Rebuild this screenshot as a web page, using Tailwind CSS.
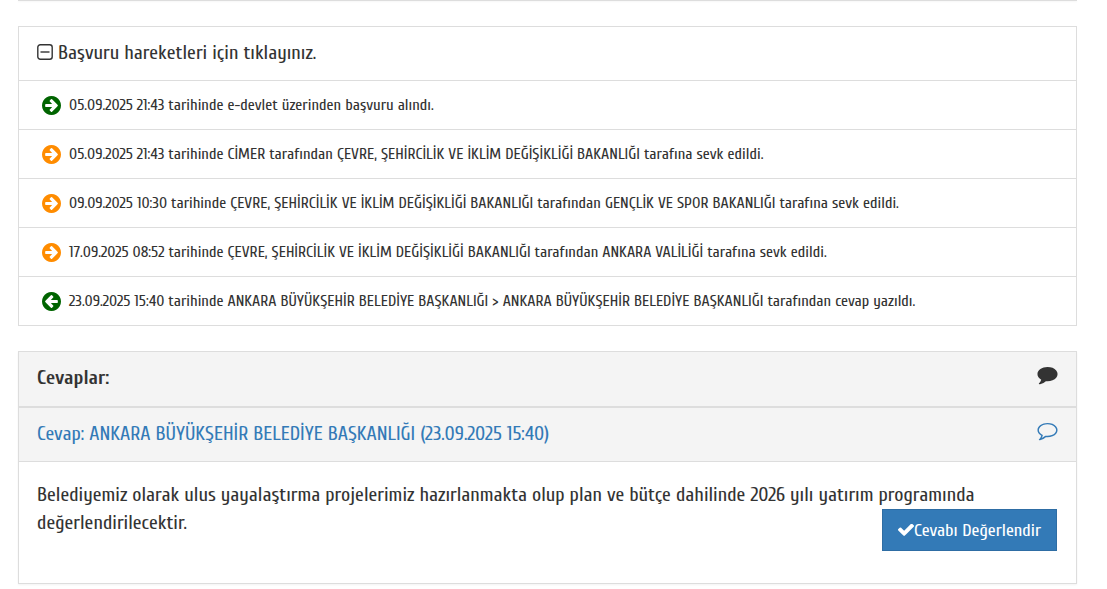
<!DOCTYPE html>
<html lang="tr">
<head>
    <meta charset="UTF-8">
    <meta name="viewport" content="width=device-width, initial-scale=1.0">
    <title>Başvuru Detayı</title>
    <script src="https://cdn.jsdelivr.net/npm/@tailwindcss/browser@4"></script>
</head>
<body class="bg-white font-['Cuprum','Roboto_Condensed','Roboto',sans-serif] text-[#333]">
    <!-- Icons -->
    <svg class="hidden">
        <symbol id="arrow-circle" viewBox="128 128 1536 1536">
            <path d="M1413 896q0-27-18-45l-91-91-362-362q-18-18-45-18t-45 18l-91 91q-18 18-18 45t18 45l189 189h-502q-26 0-45 19t-19 45v128q0 26 19 45t45 19h502l-189 189q-19 19-19 45t19 45l91 91q18 18 45 18t45-18l362-362 91-91q18-18 18-45zm251 0q0 209-103 385.500t-279.500 279.500-385.500 103-385.500-103-279.500-279.500-103-385.500 103-385.500 279.500-279.500 385.500-103 385.500 103 279.500 279.500 103 385.500z"/>
        </symbol>
    </svg>

    <div class="pl-[18px] pr-[30px] pb-1">
        <div class="h-px bg-[#ddd] shadow-xs mb-[25px]"></div>

        <!-- Application history -->
        <section class="border border-[#ddd] mb-[25px]">
            <h2>
                <button type="button" class="flex w-full items-center gap-[5px] px-[18px] pb-0.5 h-[53px] text-[20px] text-left">
                    <svg class="size-4 mb-0.5" viewBox="0 0 16 16" fill="none" stroke="currentColor" stroke-width="1.400">
                        <rect x=".8" y=".8" width="14.400" height="14.400" rx="2.500"/>
                        <path d="M3.500 8h9"/>
                    </svg>
                    Başvuru hareketleri için tıklayınız.
                </button>
            </h2>
            <ul class="text-[16px]">
                <li class="flex items-center gap-2 border-t border-[#ddd] px-[23px] h-[49px]">
                    <svg class="size-[19px] shrink-0 fill-[#006400]"><use href="#arrow-circle"/></svg>
                    <span>05.09.2025 21:43 tarihinde e-devlet üzerinden başvuru alındı.</span>
                </li>
                <li class="flex items-center gap-2 border-t border-[#ddd] px-[23px] h-[49px]">
                    <svg class="size-[19px] shrink-0 fill-[#ff8c00]"><use href="#arrow-circle"/></svg>
                    <span>05.09.2025 21:43 tarihinde CİMER tarafından ÇEVRE, ŞEHİRCİLİK VE İKLİM DEĞİŞİKLİĞİ BAKANLIĞI tarafına sevk edildi.</span>
                </li>
                <li class="flex items-center gap-2 border-t border-[#ddd] px-[23px] h-[49px]">
                    <svg class="size-[19px] shrink-0 fill-[#ff8c00]"><use href="#arrow-circle"/></svg>
                    <span>09.09.2025 10:30 tarihinde ÇEVRE, ŞEHİRCİLİK VE İKLİM DEĞİŞİKLİĞİ BAKANLIĞI tarafından GENÇLİK VE SPOR BAKANLIĞI tarafına sevk edildi.</span>
                </li>
                <li class="flex items-center gap-2 border-t border-[#ddd] px-[23px] h-[49px]">
                    <svg class="size-[19px] shrink-0 fill-[#ff8c00]"><use href="#arrow-circle"/></svg>
                    <span>17.09.2025 08:52 tarihinde ÇEVRE, ŞEHİRCİLİK VE İKLİM DEĞİŞİKLİĞİ BAKANLIĞI tarafından ANKARA VALİLİĞİ tarafına sevk edildi.</span>
                </li>
                <li class="flex items-center gap-2 border-t border-[#ddd] px-[23px] h-[49px]">
                    <svg class="size-[19px] shrink-0 fill-[#006400] rotate-180"><use href="#arrow-circle"/></svg>
                    <span>23.09.2025 15:40 tarihinde ANKARA BÜYÜKŞEHİR BELEDİYE BAŞKANLIĞI &gt; ANKARA BÜYÜKŞEHİR BELEDİYE BAŞKANLIĞI tarafından cevap yazıldı.</span>
                </li>
            </ul>
        </section>

        <!-- Answers -->
        <section class="border border-[#ddd] shadow-xs text-[20px]">
            <header class="flex justify-between bg-[#f4f4f4] border-b-2 border-[#ddd] px-[18px] pt-3 h-[56px]">
                <h2 class="font-bold leading-7">Cevaplar:</h2>
                <svg class="w-[21px] h-[23px] fill-[#333]" viewBox="0 0 1792 2048">
                    <path d="M1792 896q0 174-120 321.500t-326 233-450 85.500q-70 0-145-8-198 175-460 242-49 14-114 22-17 2-30.500-9t-17.500-29v-1q-3-4-.5-12t2-10 4.500-9.500l6-9 7-8.500 8-9q7-8 31-34.500t34.500-38 31-39.500 32.500-51 27-59 26-76q-157-89-247.500-220t-90.500-281q0-130 71-248.500t191-204.500 286-136.500 348-50.500q244 0 450 85.500t326 233 120 321.500z"/>
                </svg>
            </header>
            <a href="#cevap" class="flex justify-between bg-[#f4f4f4] border-b border-[#ddd] px-[18px] pt-3 h-[54px] text-[#337ab7]">
                <span class="leading-7">Cevap: ANKARA BÜYÜKŞEHİR BELEDİYE BAŞKANLIĞI (23.09.2025 15:40)</span>
                <svg class="w-[21px] h-[23px] fill-current" viewBox="0 0 1792 2048">
                    <path d="M896 384q-204 0-381.500 69.500t-282 187.500-104.500 255q0 112 71.500 213.500t201.500 175.500l87 50-27 96q-24 91-70 172 152-63 275-171l43-38 57 6q69 8 130 8 204 0 381.500-69.500t282-187.500 104.500-255-104.500-255-282-187.500-381.500-69.500zm896 512q0 174-120 321.500t-326 233-450 85.500q-70 0-145-8-198 175-460 242-49 14-114 22-17 2-30.500-9t-17.500-29v-1q-3-4-.5-12t2-10 4.500-9.500l6-9 7-8.500 8-9q7-8 31-34.500t34.500-38 31-39.500 32.500-51 27-59 26-76q-157-89-247.500-220t-90.500-281q0-130 71-248.500t191-204.500 286-136.500 348-50.500q244 0 450 85.500t326 233 120 321.500z"/>
                </svg>
            </a>
            <div id="cevap" class="pl-[18px] pr-[19px] pt-[19px] pb-8">
                <p class="leading-7">Belediyemiz olarak ulus yayalaştırma projelerimiz hazırlanmakta olup plan ve bütçe dahilinde 2026 yılı yatırım programında<br>değerlendirilecektir.</p>
                <div class="flex justify-end -mt-7">
                    <button type="button" class="flex items-center px-[15px] h-[42px] bg-[#337ab7] border border-[#2e6da4] text-white text-[18px]">
                        <svg class="w-4 h-3 fill-current" viewBox="121 378 1550 1144">
                            <path d="M1671 566q0 40-28 68l-724 724-136 136q-28 28-68 28t-68-28l-136-136-362-362q-28-28-28-68t28-68l136-136q28-28 68-28t68 28l294 295 656-657q28-28 68-28t68 28l136 136q28 28 28 68z"/>
                        </svg>
                        Cevabı Değerlendir
                    </button>
                </div>
            </div>
        </section>
    </div>
</body>
</html>
